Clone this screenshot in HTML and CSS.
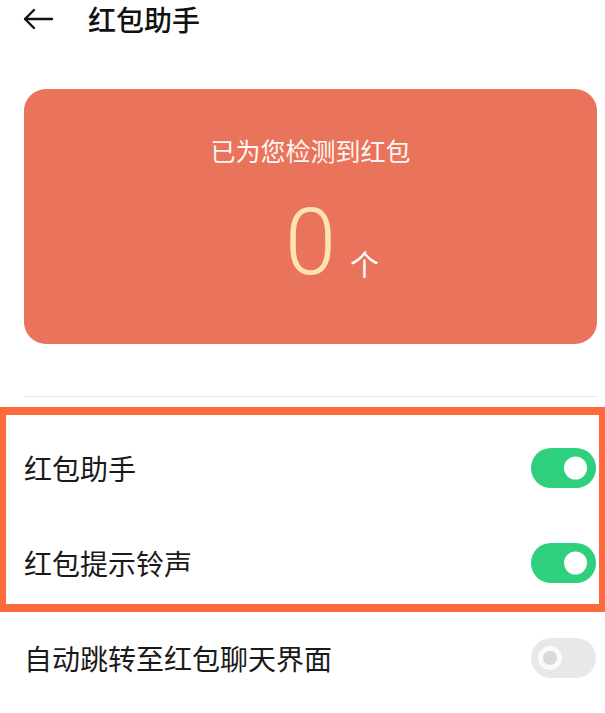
FILE: index.html
```html
<!DOCTYPE html>
<html lang="zh-CN">
<head>
    <meta charset="UTF-8">
    <meta name="viewport" content="width=device-width, initial-scale=1.0">
    <title>红包助手</title>
    <link rel="stylesheet" href="styles.css">
</head>
<body>
    <div class="header">
        <span class="back">
            <svg width="32" height="22" viewBox="0 0 32 22">
                <path d="M30 11H3M12 2L3 11l9 9" fill="none" stroke="#111" stroke-width="2.4" stroke-linecap="round" stroke-linejoin="round"/>
            </svg>
        </span>
        <h1 class="title">红包助手</h1>
    </div>

    <div class="page">
        <div class="summary-card">
            <p class="summary-label">已为您检测到红包</p>
            <div class="summary-count">
                <span class="count">0<span class="unit">个</span></span>
            </div>
        </div>

        <div class="divider"></div>
    </div>

    <div class="settings">
        <div class="setting-row">
            <span class="setting-name">红包助手</span>
            <span class="switch on"></span>
        </div>
        <div class="setting-row">
            <span class="setting-name">红包提示铃声</span>
            <span class="switch on"></span>
        </div>
        <div class="setting-row">
            <span class="setting-name">自动跳转至红包聊天界面</span>
            <span class="switch off"></span>
        </div>

        <!-- highlight frame drawn over the first two rows -->
        <div class="highlight"></div>
    </div>
</body>
</html>
```

FILE: styles.css
```css
body {
    margin: 0;
    font-family: "Noto Sans CJK SC", "Noto Sans", sans-serif;
    background-color: #ffffff;
    color: #222;
    overflow: hidden;
}
.header {
    display: flex;
    align-items: center;
    height: 38px;
    padding-left: 22px;
}
.back {
    display: flex;
    width: 66px;
}
.title {
    margin: 0;
    font-size: 28px;
    font-weight: 500;
    line-height: 38px;
    color: #111;
}
.page {
    padding: 0 8px 0 24px;
}
.summary-card {
    margin-top: 51px;
    height: 255px;
    box-sizing: border-box;
    padding-top: 44px;
    border-radius: 22px;
    background-color: #e9735b;
    text-align: center;
}
.summary-label {
    margin: 0;
    font-size: 25px;
    line-height: 35px;
    color: #fff7f2;
}
.summary-count {
    margin-top: 29px;
}
.count {
    position: relative;
    font-family: Roboto, "Liberation Sans", sans-serif;
    font-weight: 300;
    font-size: 92px;
    line-height: 91px;
    color: #fde3b3;
}
.unit {
    position: absolute;
    left: 100%;
    bottom: 18px;
    margin-left: 14px;
    font-family: "Noto Sans CJK SC", sans-serif;
    font-weight: 400;
    font-size: 29px;
    line-height: 29px;
    color: #fff;
}
.divider {
    margin-top: 52px;
    height: 1px;
    background-color: #e6e6e6;
}
.settings {
    position: relative;
    margin-top: 23px;
}
.setting-row {
    display: flex;
    align-items: center;
    justify-content: space-between;
    height: 95px;
    padding: 0 9px 0 24px;
}
.setting-name {
    font-size: 28px;
    color: #1a1a1a;
}
.switch {
    position: relative;
    width: 65px;
    height: 40px;
    border-radius: 20px;
}
.switch::after {
    content: "";
    position: absolute;
    top: 50%;
    border-radius: 50%;
    transform: translateY(-50%);
}
.switch.on {
    background-color: #2ecf7d;
}
.switch.on::after {
    right: 9px;
    width: 23px;
    height: 23px;
    background-color: #fff;
}
.switch.off {
    background-color: #e8e8e8;
}
.switch.off::after {
    left: 7px;
    width: 14px;
    height: 14px;
    border: 5px solid #fafafa;
    background-color: #d9d9d9;
}
.highlight {
    position: absolute;
    top: -13px;
    left: 0;
    width: 605px;
    height: 205px;
    box-sizing: border-box;
    border-style: solid;
    border-color: #ff6a3d;
    border-width: 8px 6px;
}
```
